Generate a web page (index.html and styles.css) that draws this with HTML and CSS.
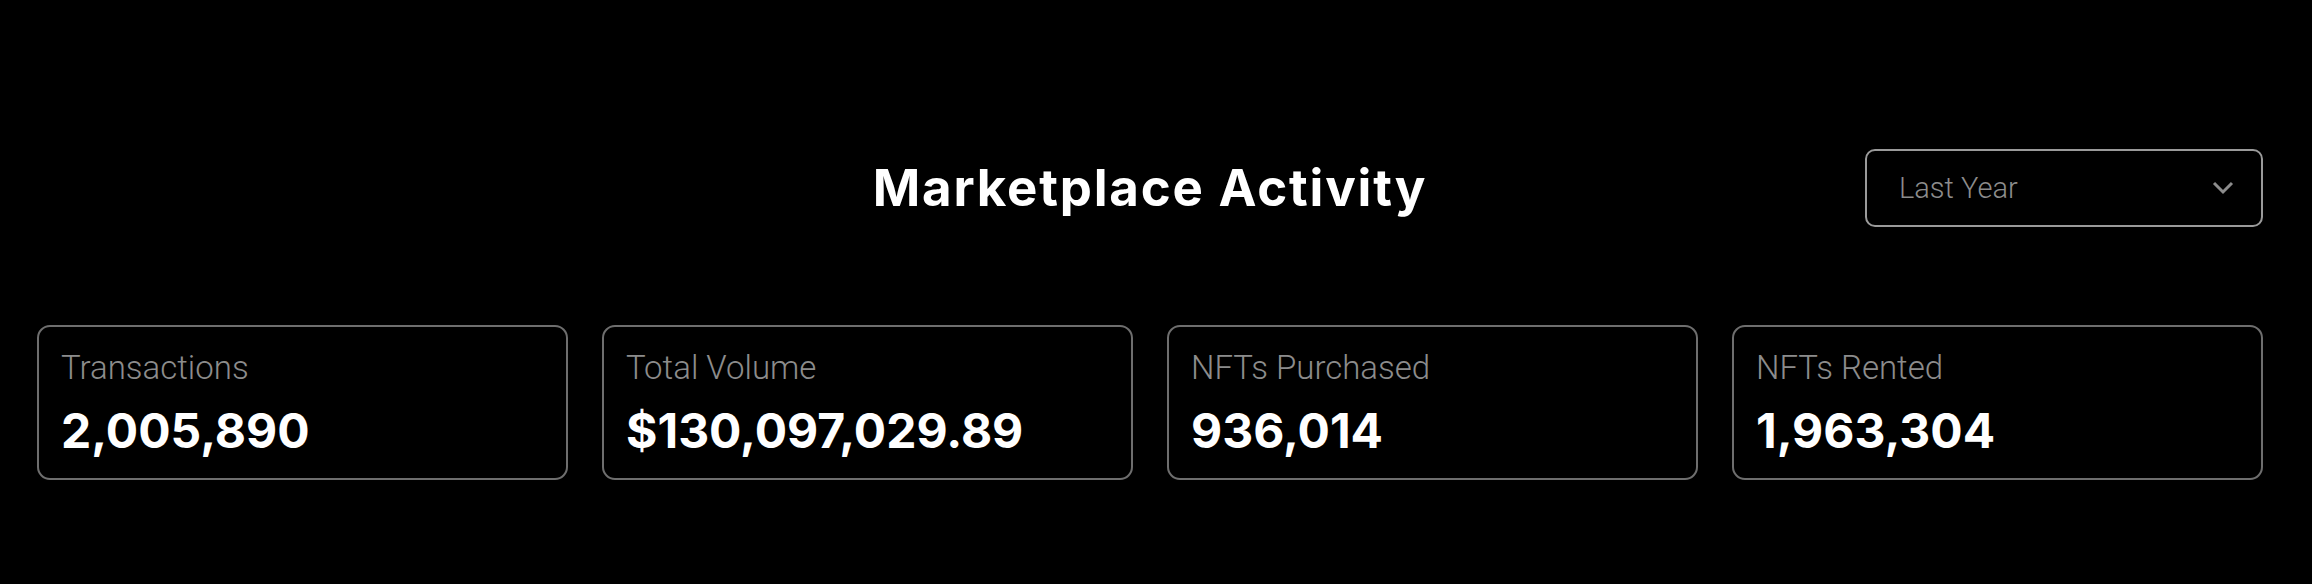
FILE: index.html
```html
<!DOCTYPE html>
<html lang="en">
<head>
<meta charset="UTF-8" />
<title>Marketplace Activity</title>
<link rel="stylesheet" href="styles.css">
</head>
<body>
<div class="activity">
	<div class="activityHead">
		<h2 class="title">Marketplace Activity</h2>
		<div class="range">
			<span>Last Year</span>
			<svg class="chevron" width="22" height="14" viewBox="0 0 22 14"><path d="M2 2l9 9 9-9" fill="none" stroke="#8c8c8c" stroke-width="3" /></svg>
		</div>
	</div>
	<ul class="stats">
		<li>
			<div class="label">Transactions</div>
			<div class="value">2,005,890</div>
		</li>
		<li>
			<div class="label">Total Volume</div>
			<div class="value">$130,097,029.89</div>
		</li>
		<li>
			<div class="label">NFTs Purchased</div>
			<div class="value">936,014</div>
		</li>
		<li>
			<div class="label">NFTs Rented</div>
			<div class="value">1,963,304</div>
		</li>
	</ul>
</div>
</body>
</html>
```

FILE: styles.css
```css
body {
margin:0;
background:#000;
color:#fff;
font-family:Roboto, "Liberation Sans", sans-serif;
}
.activity {
padding:149px 49px 0 37px;
}
.activityHead {
display:grid;
grid-template-columns:1fr auto 1fr;
align-items:center;
}
.title {
grid-column:2;
margin:0;
font-family:Inter, "Liberation Sans", sans-serif;
font-weight:700;
font-size:51px;
letter-spacing:1.8px;
line-height:60px;
}
.range {
grid-column:3;
justify-self:end;
box-sizing:border-box;
width:398px;
height:78px;
display:flex;
align-items:center;
justify-content:space-between;
padding:0 27px 0 32px;
border:2px solid #9a9a9a;
border-radius:10px;
color:#8c8c8c;
font-weight:300;
font-size:29px;
}
.chevron {
display:block;
}
.stats {
list-style:none;
margin:98px 0 0 0;
padding:0;
display:grid;
grid-template-columns:repeat(4,1fr);
gap:34px;
}
.stats li {
box-sizing:border-box;
height:155px;
padding:21px 22px 0 22px;
border:2px solid #6e6e6e;
border-radius:13px;
}
.stats .label {
color:#8c8c8c;
font-weight:300;
font-size:33px;
line-height:40px;
}
.stats .value {
margin-top:17px;
font-family:Inter, "Liberation Sans", sans-serif;
font-weight:700;
font-size:48px;
line-height:52px;
}
```
